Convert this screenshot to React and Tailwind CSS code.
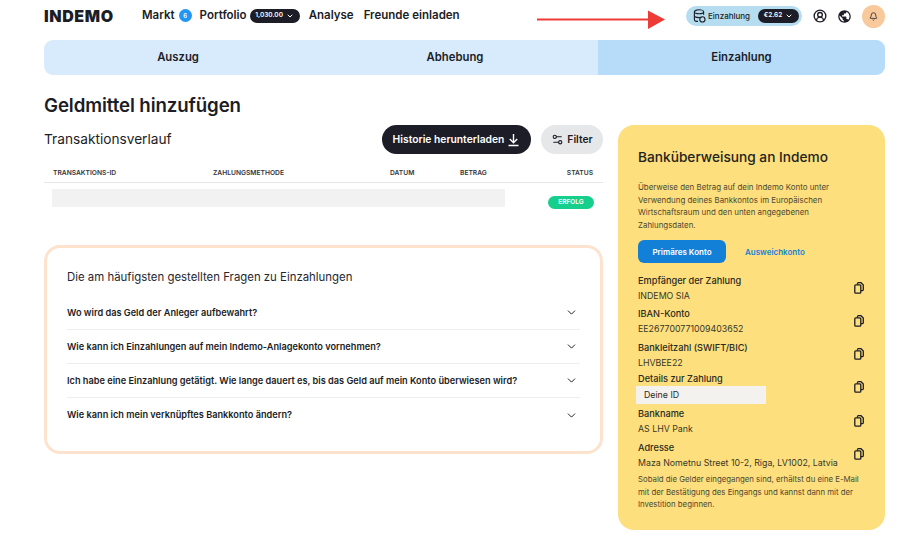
import React from "react";
import { ChevronDown, Settings2, CircleUserRound, Bell } from "lucide-react";
import { MdPublic } from "react-icons/md";

const font = { fontFamily: '"Inter","Liberation Sans",sans-serif' };

function CopyIcon() {
  return (
    <svg width="10" height="12" viewBox="0 0 10 12" fill="none" stroke="#1c1d26" strokeWidth="1.3" className="shrink-0 -mt-[3px]">
      <path d="M3.500 2.500V1.500a.8.8 0 0 1 .8-.8h2.700l2.300 2.300v4.800a.8.8 0 0 1-.8.8H7" />
      <rect x="0.800" y="2.800" width="6" height="8.400" rx="1" />
    </svg>
  );
}

function Detail({ label, value, hidden }) {
  return (
    <div className="flex items-center justify-between h-[33.3px] pr-[1px]">
      <div className="min-w-0 -mt-[1px]">
        <div className="text-[9.2px] leading-[14px] font-medium text-[#2b2a1f] whitespace-nowrap">{label}</div>
        {hidden ? (
          <div className="-ml-[2px] w-[130px] h-[18px] bg-[#f4f2ee] pl-[8px] text-[8.8px] leading-[18px] text-[#2b2a1f]">{value}</div>
        ) : (
          <div className="mt-[1px] text-[8.8px] leading-[14px] text-[#3a3826] whitespace-nowrap">{value}</div>
        )}
      </div>
      <CopyIcon />
    </div>
  );
}

function Faq({ q, last }) {
  return (
    <div className={`flex items-center justify-between h-[34px] pr-[2px] ${last ? "" : "border-b border-[#eeeeee]"}`}>
      <span className="text-[9.2px] font-semibold text-[#1c1d26] whitespace-nowrap">{q}</span>
      <ChevronDown size={13} strokeWidth={1.8} className="text-[#1c1d26]" />
    </div>
  );
}

export default function App() {
  return (
    <div style={font} className="relative w-[921px] h-[547px] bg-white overflow-hidden text-[#1c1d26]">
      <header className="h-[40px] pl-[44px] pr-[36px] flex items-center">
        <div className="text-[16px] font-black tracking-[0.6px] w-[98px] leading-none -mt-[8px]">INDEMO</div>
        <nav className="flex items-center text-[11.5px] font-semibold -mt-[9px] whitespace-nowrap">
          <span>Markt</span>
          <span className="ml-[4px] w-[13px] h-[13px] rounded-full bg-[#2196f3] text-white text-[6px] flex items-center justify-center">6</span>
          <span className="ml-[8px]">Portfolio</span>
          <span className="ml-[3px] h-[14px] w-[50px] rounded-full bg-[#1c1d26] text-white text-[6.5px] font-semibold flex items-center justify-center gap-[3px]">
            1,030.00 <ChevronDown size={8} strokeWidth={3} />
          </span>
          <span className="ml-[9px]">Analyse</span>
          <span className="ml-[10px]">Freunde einladen</span>
        </nav>
        <div className="ml-auto flex items-center -mt-[8px]">
          <div className="h-[20px] w-[116px] rounded-full bg-[#b5dcef] flex items-center pl-[7px] pr-[3px]">
            <svg width="13" height="14" viewBox="0 0 13 14" fill="none" stroke="#1c1d26" strokeWidth="1.1">
              <ellipse cx="6" cy="2.800" rx="4.600" ry="2" />
              <path d="M1.400 2.800v7.600c0 1.100 1.600 2 3.600 2" />
              <path d="M10.600 2.800v3" />
              <path d="M1.400 6.600c0 1.100 2 2 4.600 2 1 0 1.800-.1 2.500-.4" />
              <circle cx="9.400" cy="10.400" r="2.600" />
            </svg>
            <span className="ml-[2px] text-[8px] font-medium">Einzahlung</span>
            <span className="ml-auto h-[14px] w-[41px] rounded-full bg-[#1c1d26] text-white text-[6.5px] font-semibold flex items-center justify-center gap-[3px]">
              €2.62 <ChevronDown size={8} strokeWidth={3} />
            </span>
          </div>
          <CircleUserRound size={14} strokeWidth={2.3} className="ml-[11px]" />
          <MdPublic size={15} className="ml-[10px]" />
          <div className="ml-[10px] w-[23px] h-[23px] rounded-full bg-[#f8c99b] flex items-center justify-center">
            <Bell size={9} strokeWidth={2} />
          </div>
        </div>
      </header>

      {/* annotation arrow */}
      <svg className="absolute left-[536px] top-[10px]" width="130" height="20" viewBox="0 0 130 20">
        <path d="M1 9.500 H115" stroke="#ee3b36" strokeWidth="2.200" />
        <path d="M112 0.500 L129 9.500 L112 19 Z" fill="#ee3b36" />
      </svg>

      <div className="ml-[44px] w-[841px] h-[35px] rounded-[9px] overflow-hidden grid grid-cols-[554px_1fr] bg-[#d8ebfc] text-[11.3px] font-semibold">
        <div className="grid grid-cols-[268px_286px]">
          <div className="flex items-center justify-center">Auszug</div>
          <div className="flex items-center justify-center">Abhebung</div>
        </div>
        <div className="bg-[#b6dcf9] flex items-center justify-center">Einzahlung</div>
      </div>

      <main className="ml-[44px] w-[841px] flex gap-[15px]">
        <section className="w-[559px] shrink-0">
          <h1 className="mt-[19px] text-[18.7px] leading-[24px] font-semibold tracking-[-0.1px] text-[#1c1d26]">Geldmittel hinzufügen</h1>
          <div className="mt-[7px] flex items-center justify-between">
            <h2 className="text-[13.7px] font-normal">Transaktionsverlauf</h2>
            <div className="flex items-center gap-[10px]">
              <button className="h-[29px] w-[149px] rounded-full bg-[#1c1d26] text-white text-[10.3px] font-semibold flex items-center justify-center gap-[3px]">
                Historie herunterladen
                <svg width="13" height="14" viewBox="0 0 13 14" fill="none" stroke="#fff" strokeWidth="1.4">
                  <path d="M6.500 1v8.500M2.800 6l3.700 3.700L10.200 6M1.500 12.500h10" />
                </svg>
              </button>
              <button className="h-[29px] w-[62px] rounded-full bg-[#e6e7e9] text-[10.3px] font-semibold flex items-center justify-center gap-[3px]">
                <Settings2 size={13} strokeWidth={2} /> Filter
              </button>
            </div>
          </div>

          <div className="mt-[10px] h-[19px] border-b border-[#e5e7eb] grid grid-cols-[160px_177px_70px_1fr_auto] items-center pl-[9px] pr-[10px] text-[6.7px] font-semibold text-[#33343c]">
            <span>TRANSAKTIONS-ID</span>
            <span>ZAHLUNGSMETHODE</span>
            <span>DATUM</span>
            <span>BETRAG</span>
            <span>STATUS</span>
          </div>
          <div className="mt-[6px] flex items-start justify-between pl-[8px] pr-[9px]">
            <div className="w-[453px] h-[18px] bg-[#f2f2f2]" />
            <span className="mt-[7px] w-[46px] h-[13px] rounded-full bg-[#17cf8d] text-white text-[6.5px] font-semibold flex items-center justify-center">ERFOLG</span>
          </div>

          <div className="mt-[36px] h-[209px] rounded-[16px] border-[3px] border-[#fde3cd] px-[20px] pt-[21px]">
            <h3 className="text-[11.4px] leading-[16px] font-normal text-[#26272f]">Die am häufigsten gestellten Fragen zu Einzahlungen</h3>
            <div className="mt-[11px]">
              <Faq q="Wo wird das Geld der Anleger aufbewahrt?" />
              <Faq q="Wie kann ich Einzahlungen auf mein Indemo-Anlagekonto vornehmen?" />
              <Faq q="Ich habe eine Einzahlung getätigt. Wie lange dauert es, bis das Geld auf mein Konto überwiesen wird?" />
              <Faq q="Wie kann ich mein verknüpftes Bankkonto ändern?" last />
            </div>
          </div>
        </section>

        <aside className="mt-[50px] w-[267px] h-[405px] shrink-0 rounded-[16px] bg-[#fddf7e] px-[20px] pt-[23px]">
          <h2 className="text-[13.700px] leading-[18px] font-medium text-[#23231c] whitespace-nowrap">Banküberweisung an Indemo</h2>
          <p className="mt-[15px] text-[7.9px] leading-[12.6px] text-[#4c4930]">
            Überweise den Betrag auf dein Indemo Konto unter<br />
            Verwendung deines Bankkontos im Europäischen<br />
            Wirtschaftsraum und den unten angegebenen<br />
            Zahlungsdaten.
          </p>
          <div className="mt-[9px] flex items-center">
            <button className="h-[23px] w-[88px] rounded-[6px] bg-[#1380d8] text-white text-[8px] font-semibold">Primäres Konto</button>
            <span className="ml-[19px] text-[8px] font-semibold text-[#1380d8]">Ausweichkonto</span>
          </div>
          <div className="mt-[9px]">
            <Detail label="Empfänger der Zahlung" value="INDEMO SIA" />
            <Detail label="IBAN-Konto" value="EE267700771009403652" />
            <Detail label="Bankleitzahl (SWIFT/BIC)" value="LHVBEE22" />
            <Detail label="Details zur Zahlung" value="Deine ID" hidden />
            <Detail label="Bankname" value="AS LHV Pank" />
            <Detail label="Adresse" value="Maza Nometnu Street 10-2, Riga, LV1002, Latvia" />
          </div>
          <p className="mt-[1px] text-[7.8px] leading-[12.6px] text-[#4c4930] whitespace-nowrap">
            Sobald die Gelder eingegangen sind, erhältst du eine E-Mail<br />
            mit der Bestätigung des Eingangs und kannst dann mit der<br />
            Investition beginnen.
          </p>
        </aside>
      </main>
    </div>
  );
}
